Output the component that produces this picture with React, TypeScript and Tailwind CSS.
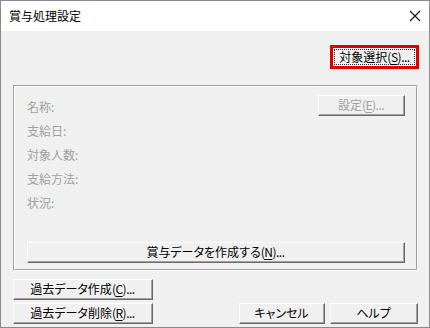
import React from 'react';

const font = { fontFamily: '"Noto Sans CJK JP", "Noto Sans", sans-serif' };

type BtnProps = {
  width: string;
  disabled?: boolean;
  children: React.ReactNode;
};

// classic 3D push button
const Btn: React.FC<BtnProps> = ({ width, disabled, children }) => (
  <div
    className={`${width} h-[21px] border border-t-white border-l-white border-r-[#696969] border-b-[#696969] bg-[#f0f0f0]`}
  >
    <div
      className={`h-full w-full flex items-center justify-center border-r border-b border-r-[#a0a0a0] border-b-[#a0a0a0] text-[12px] leading-none ${
        disabled ? 'text-[#a0a0a0]' : 'text-black'
      }`}
    >
      {children}
    </div>
  </div>
);

const Key: React.FC<{ k: string }> = ({ k }) => (
  <span className="tracking-[-0.5px]">
    (<span className="underline underline-offset-2">{k}</span>)...
  </span>
);

export default function App() {
  const labels = ['名称:', '支給日:', '対象人数:', '支給方法:', '状況:'];

  return (
    <div
      className="w-[430px] h-[328px] flex flex-col border border-[#8a8a8a] bg-[#f0f0f0] overflow-hidden [font-feature-settings:'palt']"
      style={font}
    >
      {/* title bar */}
      <div className="h-[30px] bg-white flex items-center justify-between pl-[8px] pr-[8px]">
        <span className="text-[12px] text-black [font-feature-settings:normal]">賞与処理設定</span>
        <svg width="12" height="12" viewBox="0 0 12 12">
          <path d="M1 1 L11 11 M11 1 L1 11" stroke="#111" strokeWidth="1.1" />
        </svg>
      </div>

      <div className="flex-1 flex flex-col pl-[12px] pr-[10px]">
        {/* target select */}
        <div className="flex justify-end mt-[14px]">
          <div className="w-[89px] h-[24px] border-[3px] border-[#e00000] bg-[#f0f0f0] p-[1px]">
            <div className="h-full w-full border border-dotted border-[#333] flex items-center justify-center text-[12px] leading-none text-black">
              対象選択<Key k="S" />
            </div>
          </div>
        </div>

        {/* group box */}
        <div className="mt-[16px] w-[405px] border border-t-[#a0a0a0] border-l-[#a0a0a0] border-r-white border-b-white">
          <div className="border border-t-white border-l-white border-r-[#a0a0a0] border-b-[#a0a0a0] pl-[12px] pr-[11px] pt-[8px] pb-[6px]">
            <div className="flex justify-between items-start">
              <div className="flex flex-col [font-feature-settings:normal]">
                {labels.map((l) => (
                  <div key={l} className="h-[24px] flex items-center text-[12px] text-[#a0a0a0]">
                    {l}
                  </div>
                ))}
              </div>
              <Btn width="w-[87px]" disabled>
                設定<Key k="E" />
              </Btn>
            </div>
            <div className="mt-[27px]">
              <Btn width="w-full">
                賞与データを作成する<Key k="N" />
              </Btn>
            </div>
          </div>
        </div>

        {/* bottom buttons */}
        <div className="mt-[8px] flex justify-between items-end">
          <div className="flex flex-col gap-[3px]">
            <Btn width="w-[140px]">
              過去データ作成<Key k="C" />
            </Btn>
            <Btn width="w-[140px]">
              過去データ削除<Key k="R" />
            </Btn>
          </div>
          <div className="flex gap-[5px] mr-[1px]">
            <Btn width="w-[86px]">キャンセル</Btn>
            <Btn width="w-[88px]">ヘルプ</Btn>
          </div>
        </div>
      </div>
    </div>
  );
}
